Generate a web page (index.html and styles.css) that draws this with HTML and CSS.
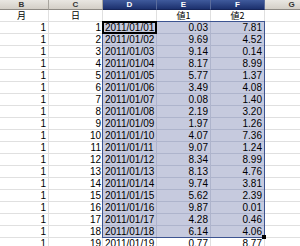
FILE: index.html
```html
<!DOCTYPE html>
<html>
<head>
<meta charset="utf-8">
<link rel="stylesheet" href="styles.css">
</head>
<body>
<div class="sheet">
  <div class="hdr">B</div><div class="hdr">C</div><div class="hdr on">D</div><div class="hdr on">E</div><div class="hdr on">F</div><div class="hdr">G</div>
  <div class="c ctr jp">月</div><div class="c ctr jp">日</div><div class="c"></div><div class="c ctr jp">値1</div><div class="c ctr jp">値2</div><div class="c"></div>
  <div class="c r">1</div><div class="c r rc">1</div><div class="c s d">2011/01/01</div><div class="c s r">0.03</div><div class="c s r">7.81</div><div class="c"></div>
  <div class="c r">1</div><div class="c r rc">2</div><div class="c s d">2011/01/02</div><div class="c s r">9.69</div><div class="c s r">4.52</div><div class="c"></div>
  <div class="c r">1</div><div class="c r rc">3</div><div class="c s d">2011/01/03</div><div class="c s r">9.14</div><div class="c s r">0.14</div><div class="c"></div>
  <div class="c r">1</div><div class="c r rc">4</div><div class="c s d">2011/01/04</div><div class="c s r">8.17</div><div class="c s r">8.99</div><div class="c"></div>
  <div class="c r">1</div><div class="c r rc">5</div><div class="c s d">2011/01/05</div><div class="c s r">5.77</div><div class="c s r">1.37</div><div class="c"></div>
  <div class="c r">1</div><div class="c r rc">6</div><div class="c s d">2011/01/06</div><div class="c s r">3.49</div><div class="c s r">4.08</div><div class="c"></div>
  <div class="c r">1</div><div class="c r rc">7</div><div class="c s d">2011/01/07</div><div class="c s r">0.08</div><div class="c s r">1.40</div><div class="c"></div>
  <div class="c r">1</div><div class="c r rc">8</div><div class="c s d">2011/01/08</div><div class="c s r">2.19</div><div class="c s r">3.20</div><div class="c"></div>
  <div class="c r">1</div><div class="c r rc">9</div><div class="c s d">2011/01/09</div><div class="c s r">1.97</div><div class="c s r">1.26</div><div class="c"></div>
  <div class="c r">1</div><div class="c r rc">10</div><div class="c s d">2011/01/10</div><div class="c s r">4.07</div><div class="c s r">7.36</div><div class="c"></div>
  <div class="c r">1</div><div class="c r rc">11</div><div class="c s d">2011/01/11</div><div class="c s r">9.07</div><div class="c s r">1.24</div><div class="c"></div>
  <div class="c r">1</div><div class="c r rc">12</div><div class="c s d">2011/01/12</div><div class="c s r">8.34</div><div class="c s r">8.99</div><div class="c"></div>
  <div class="c r">1</div><div class="c r rc">13</div><div class="c s d">2011/01/13</div><div class="c s r">8.13</div><div class="c s r">4.76</div><div class="c"></div>
  <div class="c r">1</div><div class="c r rc">14</div><div class="c s d">2011/01/14</div><div class="c s r">9.74</div><div class="c s r">3.81</div><div class="c"></div>
  <div class="c r">1</div><div class="c r rc">15</div><div class="c s d">2011/01/15</div><div class="c s r">5.62</div><div class="c s r">2.39</div><div class="c"></div>
  <div class="c r">1</div><div class="c r rc">16</div><div class="c s d">2011/01/16</div><div class="c s r">9.87</div><div class="c s r">0.01</div><div class="c"></div>
  <div class="c r">1</div><div class="c r rc">17</div><div class="c s d">2011/01/17</div><div class="c s r">4.28</div><div class="c s r">0.46</div><div class="c"></div>
  <div class="c r">1</div><div class="c r rc">18</div><div class="c s d">2011/01/18</div><div class="c s r">6.14</div><div class="c s r">4.06</div><div class="c"></div>
  <div class="c r">1</div><div class="c r rc">19</div><div class="c d">2011/01/19</div><div class="c r">0.77</div><div class="c r">8.77</div><div class="c"></div>
  <div class="selection"></div>
  <div class="active"></div>
  <div class="handle"></div>
</div>
</body>
</html>
```
FILE: styles.css
```css
html, body {
  margin: 0;
  padding: 0;
  background: #ffffff;
  overflow: hidden;
}
.sheet {
  position: relative;
  margin-left: -5px;
  display: grid;
  grid-template-columns: repeat(6, 54px);
  grid-template-rows: 10px repeat(19, 12px);
  font-family: "Liberation Sans Narrow", "Liberation Sans", Arial, sans-serif;
  font-size: 10px;
  color: #000;
}
.hdr {
  box-sizing: border-box;
  border-right: 1px solid #a8a59e;
  border-bottom: 1px solid #8e8b85;
  background: linear-gradient(#e9e7e2, #d3cfc7);
  color: #333;
  font-family: "Liberation Sans", Arial, sans-serif;
  font-size: 8px;
  font-weight: bold;
  line-height: 9px;
  text-align: center;
}
.hdr.on {
  background: linear-gradient(#3f5a9c, #1c306d);
  border-right-color: #5a6c9c;
  border-bottom-color: #16255a;
  color: #ffffff;
}
.c {
  box-sizing: border-box;
  border-right: 1px solid #e0e0e0;
  border-bottom: 1px solid #e0e0e0;
  line-height: 11px;
  white-space: nowrap;
  overflow: hidden;
}
.c.s {
  background: #c6cade;
  border-right-color: #aeb4cc;
  border-bottom-color: #aeb4cc;
}
.r {
  text-align: right;
  padding-right: 2px;
}
.rc {
  padding-right: 1px;
}
.d {
  padding-left: 2px;
}
.ctr {
  text-align: center;
}
.jp {
  font-family: "Noto Sans CJK JP", "Liberation Sans", sans-serif;
  font-size: 9px;
  line-height: 11px;
}
.selection {
  position: absolute;
  left: 107px;
  top: 21px;
  width: 163px;
  height: 217px;
  box-sizing: border-box;
  border: 1px solid #3d5491;
}
.active {
  position: absolute;
  left: 107px;
  top: 21px;
  width: 55px;
  height: 13px;
  box-sizing: border-box;
  border: 2px solid #000;
}
.handle {
  position: absolute;
  left: 267px;
  top: 235px;
  width: 4px;
  height: 4px;
  background: #000;
}
```
